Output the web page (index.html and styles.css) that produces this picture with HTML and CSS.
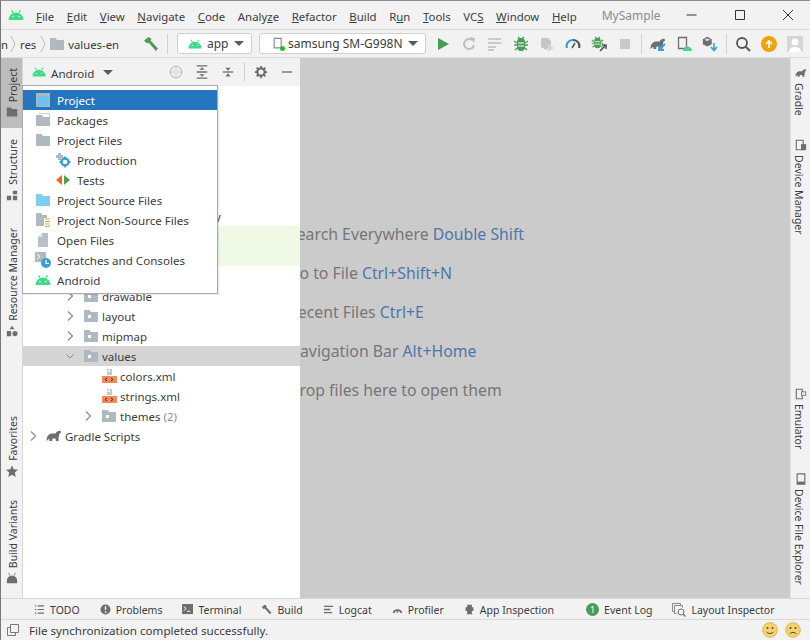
FILE: index.html
```html
<!DOCTYPE html>
<html lang="en">
<head>
  <meta charset="UTF-8" />
  <title>MySample</title>
  <link rel="stylesheet" href="styles.css">
</head>
<body>
  <svg class="defs" width="0" height="0">
    <symbol id="android" viewBox="0 0 16 12"><path d="M3.600 1.200 5 3.600M12.400 1.200 11 3.600" stroke="#3ddc84" stroke-width="1.200" fill="none"/><path d="M0.500 11a7.500 7.500 0 0 1 15 0z" fill="#3ddc84"/><circle cx="5" cy="7.600" r=".8" fill="#fff"/><circle cx="11" cy="7.600" r=".8" fill="#fff"/></symbol>
    <symbol id="folder" viewBox="0 0 16 14"><path d="M1 1h5.500l1.500 2h7v10H1z" fill="#afb9c0"/></symbol>
    <symbol id="resfolder" viewBox="0 0 16 14"><path d="M1 1h5.500l1.500 2h7v10H1z" fill="#afb9c0"/><rect x="5" y="6" width="3" height="3" fill="#fff"/></symbol>
    <symbol id="chev" viewBox="0 0 10 12"><path d="M3 1.500 7.500 6 3 10.500" fill="none" stroke="#8a8a8a" stroke-width="1.200"/></symbol>
    <symbol id="chevdown" viewBox="0 0 12 10"><path d="M1.500 3 6 7.500 10.500 3" fill="none" stroke="#8a8a8a" stroke-width="1.200"/></symbol>
    <symbol id="gradle" viewBox="0 0 16 12"><path d="M.5 11C.5 6 3 3.500 6.500 3.500h3C10.500 1.500 13 .5 14.500 1c1 .6.500 2.500-1 2.500-.5 2-1 4-1 7.500h-2.500l-.5-2.500H6.500L6 11H3.500l-.3-2.300C2.300 9.300 1.500 10 .5 11z" fill="#6e6e6e"/></symbol>
    <symbol id="xml" viewBox="0 0 16 16"><path d="M6 1h5v6H6z" fill="#c4cbd0"/><path d="M6 4 9 1v3z" fill="#fff"/><rect x="1" y="8" width="15" height="7" fill="#f08a5d"/><path d="M6 10 4 11.500 6 13M10 10l2 1.500L10 13" fill="none" stroke="#4b2a18" stroke-width="1"/></symbol>
    <symbol id="hammer" viewBox="0 0 16 16"><path d="M1 4.500 5.500 1l3 2-1 1.500L15 12.500 13 15 5.500 6.500 4 7.500z" fill="#499c54"/></symbol>
    <symbol id="phone" viewBox="0 0 14 16"><path d="M1.500 1.500h8v11h-8z" fill="none" stroke="#7f8b91" stroke-width="1.300"/></symbol>
    <symbol id="bug" viewBox="0 0 16 16"><path d="M8 2a4 4 0 0 1 4 4v5a4 4 0 0 1-8 0V6a4 4 0 0 1 4-4z" fill="#499c54"/><path d="M1 5l3 2M15 5l-3 2M1 9h3M15 9h-3M2 14l2-2M14 14l-2-2M5 1l2 2M11 1 9 3" stroke="#499c54" stroke-width="1.300"/><path d="M5 7h6M5 10h6" stroke="#fff" stroke-width="1"/></symbol>
    <symbol id="cube" viewBox="0 0 16 16"><path d="M6.500 1 12 4v6l-5.500 3L1 10V4z" fill="#6e6e6e"/><path d="M3 4.500 6.500 6.500 10 4.500 6.500 2.700z" fill="#d8d8d8"/></symbol>
    <symbol id="smile" viewBox="0 0 16 16"><circle cx="8" cy="8" r="7.300" fill="#f5d36a" stroke="#d7a93a" stroke-width=".8"/><circle cx="5.500" cy="6" r="1" fill="#4d4d4d"/><circle cx="10.500" cy="6" r="1" fill="#4d4d4d"/><path d="M4.500 10c1.500 2 5.500 2 7 0" fill="none" stroke="#4d4d4d"/></symbol>
    <symbol id="frown" viewBox="0 0 16 16"><circle cx="8" cy="8" r="7.300" fill="#f5d36a" stroke="#d7a93a" stroke-width=".8"/><circle cx="5.500" cy="6" r="1" fill="#4d4d4d"/><circle cx="10.500" cy="6" r="1" fill="#4d4d4d"/><path d="M4.500 12c1.500-2 5.500-2 7 0" fill="none" stroke="#4d4d4d"/></symbol>
  </svg>

  <div class="app">
    <header class="titlebar">
      <svg class="logo"><use href="#android"/></svg>
      <nav class="menu">
        <span><u>F</u>ile</span><span><u>E</u>dit</span><span><u>V</u>iew</span><span><u>N</u>avigate</span><span><u>C</u>ode</span><span>Analy<u>z</u>e</span><span><u>R</u>efactor</span><span><u>B</u>uild</span><span>R<u>u</u>n</span><span><u>T</u>ools</span><span>VC<u>S</u></span><span><u>W</u>indow</span><span><u>H</u>elp</span>
      </nav>
      <span class="app-title">MySample</span>
      <div class="winctl">
        <svg viewBox="0 0 12 12"><path d="M.5 6h10" stroke="#333"/></svg>
        <svg viewBox="0 0 12 12"><path d="M1.500 1.500h9v9h-9z" fill="none" stroke="#333"/></svg>
        <svg viewBox="0 0 12 12"><path d="m1 1 10 10M11 1 1 11" stroke="#333"/></svg>
      </div>
    </header>

    <div class="navbar">
      <div class="crumbs">
        <span class="crumb-cut">n</span>
        <svg class="crumb-sep" viewBox="0 0 6 20"><path d="M1 2l4 8-4 8" fill="none" stroke="#bbb"/></svg>
        <span>res</span>
        <svg class="crumb-sep" viewBox="0 0 6 20"><path d="M1 2l4 8-4 8" fill="none" stroke="#bbb"/></svg>
        <svg class="ico-16 crumb-folder"><use href="#folder"/></svg>
        <span>values-en</span>
      </div>
      <svg class="ico-16 hammer"><use href="#hammer"/></svg>
      <i class="sep"></i>
      <div class="combo combo-app">
        <svg class="ico-14"><use href="#android"/></svg><span>app</span><b class="caret"></b>
      </div>
      <div class="combo combo-device">
        <span class="device-ico"><svg class="ico-14"><use href="#phone"/></svg><i class="dot"></i></span><span>samsung SM-G998N</span><b class="caret"></b>
      </div>
      <div class="tools">
        <span><svg viewBox="0 0 16 16"><path d="M3 2l11 6-11 6z" fill="#499c54"/></svg></span>
        <span><svg viewBox="0 0 16 16"><path d="M13 9a5 5 0 1 1-2-5" fill="none" stroke="#b9bfc3" stroke-width="2"/><path d="M9 1l5 1-1 5z" fill="#b9bfc3"/></svg></span>
        <span><svg viewBox="0 0 16 16"><path d="M1 3h13M1 7h13M1 11h8M1 14h6" stroke="#b9bfc3" stroke-width="1.500"/></svg></span>
        <span><svg><use href="#bug"/></svg></span>
        <span><svg viewBox="0 0 16 16"><path d="M2 2h7l3 3v4l-5 5-5-3z" fill="#c2c7ca"/><path d="M9 8l6 4-6 4z" fill="#d4d7d9"/></svg></span>
        <span><svg viewBox="0 0 16 16"><path d="M2 12a6 6 0 0 1 6-8" fill="none" stroke="#389fd6" stroke-width="2.200"/><path d="M8 4a6 6 0 0 1 6 8" fill="none" stroke="#555" stroke-width="2.200"/><path d="M7 12l3-5" stroke="#555" stroke-width="1.500"/></svg></span>
        <span><svg viewBox="0 0 16 16"><use href="#bug" width="13" height="13"/><path d="M9 15l6-6M11 9h4v4" fill="none" stroke="#555" stroke-width="1.600"/></svg></span>
        <span><svg viewBox="0 0 16 16"><rect x="3" y="3" width="10" height="10" fill="#c6cacc"/></svg></span>
        <i class="sep"></i>
        <span><svg viewBox="0 0 16 16"><use href="#gradle"/><path d="M15 8l-6 6M9 9.500V14h5" fill="none" stroke="#389fd6" stroke-width="1.800"/></svg></span>
        <span><svg viewBox="0 0 16 16"><path d="M2.500 1.500h8v11h-8z" fill="none" stroke="#6e6e6e" stroke-width="1.300"/><path d="M7 15a4.500 4.500 0 0 1 9 0z" fill="#3ddc84"/></svg></span>
        <span><svg viewBox="0 0 16 16"><use href="#cube" width="13" height="13"/><path d="M12 7v7M9 11l3 3.500 3-3.500" fill="none" stroke="#389fd6" stroke-width="1.600"/></svg></span>
        <i class="sep"></i>
        <span><svg viewBox="0 0 16 16"><circle cx="7" cy="7" r="5" fill="none" stroke="#555" stroke-width="1.800"/><path d="M10.500 10.500 15 15" stroke="#555" stroke-width="2"/></svg></span>
        <span><i class="update"><svg viewBox="0 0 10 10"><path d="M5 9V2M2 5l3-3 3 3" fill="none" stroke="#fff" stroke-width="1.600"/></svg></i></span>
        <span><svg class="user" viewBox="0 0 16 16"><rect width="16" height="16" fill="#d4d6d8"/><circle cx="8" cy="6" r="3.500" fill="#fff"/><path d="M2 16c0-4 3-5 6-5s6 1 6 5z" fill="#fff"/></svg></span>
      </div>
    </div>

    <div class="main">
      <aside class="rail rail-left">
        <div class="tab tab-active"><span>Project</span><svg viewBox="0 0 16 14"><path d="M1 1h5.500l1.500 2h7v10H1z" fill="#6e6e6e"/></svg></div>
        <div class="tab tab-structure"><span>Structure</span><svg viewBox="0 0 14 14"><path d="M1 8h5v5H1zM8 8h5v5H8zM8 2h5v4H8z" fill="#6e6e6e"/></svg></div>
        <div class="tab tab-resource"><span>Resource Manager</span><svg viewBox="0 0 14 14"><path d="M7 1l3 4H4zM1 7h5v6H1z" fill="#6e6e6e"/><circle cx="10.500" cy="10" r="3" fill="#6e6e6e"/></svg></div>
        <div class="tab tab-favorites"><span>Favorites</span><svg viewBox="0 0 14 14"><path d="M7 .5l2 4.500 5 .5-3.700 3.300L11.300 14 7 11.400 2.700 14l1-5.200L0 5.500 5 5z" fill="#6e6e6e"/></svg></div>
        <div class="tab tab-variants"><span>Build Variants</span><svg viewBox="0 0 14 14"><path d="M3 1l1.500 3M11 1 9.500 4" stroke="#6e6e6e"/><path d="M1 13v-3a6 6 0 0 1 12 0v3z" fill="#6e6e6e"/></svg></div>
      </aside>

      <section class="panel">
        <div class="panel-head">
          <svg class="ico-14"><use href="#android"/></svg>
          <span class="panel-name">Android</span>
          <b class="caret"></b>
          <div class="panel-tools">
            <span><svg viewBox="0 0 16 16"><circle cx="8" cy="8" r="6.500" fill="none" stroke="#c5c9cb" stroke-width="1.500"/><circle cx="8" cy="8" r="2" fill="none" stroke="#c5c9cb"/><path d="M8 0v5M8 11v5M0 8h5M11 8h5" stroke="#c5c9cb"/></svg></span>
            <span><svg viewBox="0 0 16 16"><path d="M2 1h12M2 15h12M2 8h12" stroke="#6e6e6e" stroke-width="1.500" fill="none"/><path d="M8 2.500l3 3H5zM8 13.500l-3-3h6z" fill="#6e6e6e"/></svg></span>
            <span><svg viewBox="0 0 16 16"><path d="M2 8h12" stroke="#6e6e6e" stroke-width="1.500"/><path d="M8 6.500l-3-3.500h6zM8 9.500l3 3.500H5z" fill="#6e6e6e"/></svg></span>
            <i class="sep"></i>
            <span><svg viewBox="0 0 16 16"><circle cx="8" cy="8" r="4.200" fill="none" stroke="#6e6e6e" stroke-width="2.600"/><path d="M8 1v3M8 12v3M1 8h3M12 8h3M3 3l2 2M11 11l2 2M13 3l-2 2M5 11l-2 2" stroke="#6e6e6e" stroke-width="2"/></svg></span>
            <span><svg viewBox="0 0 16 16"><path d="M2 8h12" stroke="#6e6e6e" stroke-width="1.500"/></svg></span>
          </div>
        </div>

        <div class="tree">
          <div class="row lv0"><svg class="chev"><use href="#chevdown"/></svg><svg class="ico-16"><use href="#folder"/></svg><span>app</span></div>
          <div class="row lv1"><svg class="chev"><use href="#chev"/></svg><svg class="ico-16"><use href="#folder"/></svg><span>manifests</span></div>
          <div class="row lv1"><svg class="chev"><use href="#chevdown"/></svg><svg class="ico-16"><use href="#folder"/></svg><span>java</span></div>
          <div class="row lv2"><svg class="chev"><use href="#chevdown"/></svg><svg class="ico-16"><use href="#folder"/></svg><span>com.example</span></div>
          <div class="row lv3"><svg class="chev"><use href="#chevdown"/></svg><svg class="ico-16"><use href="#folder"/></svg><span>mysample</span></div>
          <div class="row lv3"><svg class="chev"><use href="#chevdown"/></svg><svg class="ico-16"><use href="#folder"/></svg><span>ui</span></div>
          <div class="row lv-file"><svg class="ico-16"><use href="#xml"/></svg><span>MainActivity</span></div>
          <div class="row row-test"><svg class="chev"><use href="#chev"/></svg><svg class="ico-16"><use href="#folder"/></svg><span>java <em>(androidTest)</em></span></div>
          <div class="row row-test"><svg class="chev"><use href="#chev"/></svg><svg class="ico-16"><use href="#folder"/></svg><span>test</span></div>
          <div class="row lv1"><svg class="chev"><use href="#chevdown"/></svg><svg class="ico-16"><use href="#resfolder"/></svg><span>res</span></div>
          <div class="row lv2"><svg class="chev"><use href="#chev"/></svg><svg class="ico-16"><use href="#resfolder"/></svg><span>drawable</span></div>
          <div class="row lv2"><svg class="chev"><use href="#chev"/></svg><svg class="ico-16"><use href="#resfolder"/></svg><span>layout</span></div>
          <div class="row lv2"><svg class="chev"><use href="#chev"/></svg><svg class="ico-16"><use href="#resfolder"/></svg><span>mipmap</span></div>
          <div class="row lv2 row-selected"><svg class="chev"><use href="#chevdown"/></svg><svg class="ico-16"><use href="#resfolder"/></svg><span>values</span></div>
          <div class="row lv3 row-leaf"><i class="chev"></i><svg class="ico-16"><use href="#xml"/></svg><span>colors.xml</span></div>
          <div class="row lv3 row-leaf"><i class="chev"></i><svg class="ico-16"><use href="#xml"/></svg><span>strings.xml</span></div>
          <div class="row lv3"><svg class="chev"><use href="#chev"/></svg><svg class="ico-16"><use href="#resfolder"/></svg><span>themes <em>(2)</em></span></div>
          <div class="row lv0"><svg class="chev"><use href="#chev"/></svg><svg class="ico-16"><use href="#gradle"/></svg><span>Gradle Scripts</span></div>
        </div>

        <ul class="popup">
          <li class="active"><svg class="ico-16" viewBox="0 0 16 16"><rect x="1" y="1" width="14" height="14" fill="#a9b7c1"/><rect x="2.500" y="4.500" width="11" height="9" fill="#6cc0ea"/></svg>Project</li>
          <li><svg class="ico-16" viewBox="0 0 16 16"><path d="M1 3h6l1 2h7v9H1z" fill="#afb9c0"/><path d="M4 1h11v4h-1V2H4z" fill="#c9d0d4"/></svg>Packages</li>
          <li><svg class="ico-16"><use href="#folder"/></svg>Project Files</li>
          <li class="sub"><svg class="ico-16" viewBox="0 0 16 16"><path d="M3 1v2H1v3h2v2h3V6h2V3H6V1z" fill="#afb9c0"/><circle cx="10" cy="10" r="3.500" fill="none" stroke="#389fd6" stroke-width="2.400"/><path d="M10 4.500v2M10 13.500v2M4.500 10h2M13.500 10h2" stroke="#389fd6" stroke-width="1.800"/></svg>Production</li>
          <li class="sub"><svg class="ico-16" viewBox="0 0 16 16"><path d="M7 3v10L1 8z" fill="#f26522"/><path d="M9 3v10l6-5z" fill="#4fa14d"/></svg>Tests</li>
          <li><svg class="ico-16" viewBox="0 0 16 14"><path d="M1 1h5.500l1.500 2h7v10H1z" fill="#7fcdf0"/></svg>Project Source Files</li>
          <li><svg class="ico-16" viewBox="0 0 16 16"><path d="M1 1h5l1.500 2H12v3H9v8H1z" fill="#afb9c0"/><path d="M10 7h5M10 9.500h5M10 12h5M10 14.500h5" stroke="#e8a33d" stroke-width="1.200"/></svg>Project Non-Source Files</li>
          <li><svg class="ico-16" viewBox="0 0 16 16"><path d="M3 5l4-4h6v14H3z" fill="#b8c1c7"/><path d="M3 5h4V1z" fill="#e3e7e9"/></svg>Open Files</li>
          <li><svg class="ico-16" viewBox="0 0 16 16"><rect x="0" y="0" width="11" height="10" fill="#afb9c0"/><path d="M2 2l3 2.500L2 7" fill="none" stroke="#fff"/><circle cx="11" cy="11" r="5" fill="#389fd6"/><path d="M11 8v3.500h3" fill="none" stroke="#fff" stroke-width="1.200"/></svg>Scratches and Consoles</li>
          <li><svg class="ico-16"><use href="#android"/></svg>Android</li>
        </ul>
      </section>

      <section class="editor">
        <p>Search Everywhere <kbd>Double Shift</kbd></p>
        <p>Go to File <kbd>Ctrl+Shift+N</kbd></p>
        <p>Recent Files <kbd>Ctrl+E</kbd></p>
        <p>Navigation Bar <kbd>Alt+Home</kbd></p>
        <p>Drop files here to open them</p>
      </section>

      <aside class="rail rail-right">
        <div class="tab tab-gradle"><svg viewBox="0 0 16 12"><use href="#gradle"/></svg><span>Gradle</span></div>
        <div class="tab tab-devmgr"><svg viewBox="0 0 14 14"><path d="M1.500 1.500h8v11h-8z" fill="none" stroke="#6e6e6e" stroke-width="1.300"/><rect x="7" y="6" width="6" height="7" fill="#6e6e6e"/></svg><span>Device Manager</span></div>
        <div class="tab tab-emulator"><svg viewBox="0 0 14 14"><path d="M1.500 1.500h7v11h-7z" fill="none" stroke="#6e6e6e" stroke-width="1.300"/><rect x="7.500" y="4.500" width="5" height="4" fill="#f2f2f2" stroke="#6e6e6e"/></svg><span>Emulator</span></div>
        <div class="tab tab-explorer"><svg viewBox="0 0 14 14"><path d="M2.500 1h9v12h-9z" fill="none" stroke="#6e6e6e" stroke-width="1.300"/><rect x="2.500" y="10" width="9" height="3" fill="#6e6e6e"/></svg><span>Device File Explorer</span></div>
      </aside>
    </div>

    <div class="toolbar">
      <span class="tw"><svg viewBox="0 0 12 12"><path d="M1 2h1.500M4 2h7M1 6h1.500M4 6h7M1 10h1.500M4 10h7" stroke="#6e6e6e" stroke-width="1.300"/></svg>TODO</span>
      <span class="tw"><svg viewBox="0 0 12 12"><circle cx="6" cy="6" r="5.500" fill="#6e6e6e"/><path d="M6 2.500v4M6 8v1.500" stroke="#fff" stroke-width="1.400"/></svg>Problems</span>
      <span class="tw"><svg viewBox="0 0 12 12"><rect width="12" height="11" fill="#6e6e6e"/><path d="M2 3l2.500 2L2 7M5.500 8H9" fill="none" stroke="#fff"/></svg>Terminal</span>
      <span class="tw"><svg viewBox="0 0 16 16"><path d="M1 4.500 5.500 1l3 2-1 1.500L15 12.500 13 15 5.500 6.500 4 7.500z" fill="#6e6e6e"/></svg>Build</span>
      <span class="tw"><svg viewBox="0 0 12 12"><path d="M1 2.500h10M1 6h7M1 9.500h9" stroke="#6e6e6e" stroke-width="1.400"/></svg>Logcat</span>
      <span class="tw"><svg viewBox="0 0 16 16"><path d="M2 13a6.500 6.500 0 0 1 12 0" fill="none" stroke="#6e6e6e" stroke-width="2.400"/><path d="M7 13l3-5" stroke="#6e6e6e" stroke-width="1.500"/></svg>Profiler</span>
      <span class="tw tw-wide"><svg viewBox="0 0 12 14"><path d="M3 1h6v3h2v5H9v3l1 1H2l1-1V9H1V4h2z" fill="#6e6e6e"/></svg>App Inspection</span>
      <span class="tw"><i class="badge">1</i>Event Log</span>
      <span class="tw"><svg class="tw-lg" viewBox="0 0 14 14"><path d="M.5 .5h8v2M.5 .5v8h2M2.500 2.500h8v2M2.500 2.500v8h2" fill="none" stroke="#8a8a8a"/><circle cx="9" cy="9" r="3" fill="none" stroke="#6e6e6e"/><path d="M11 11l2.500 2.500" stroke="#6e6e6e" stroke-width="1.300"/></svg>Layout Inspector</span>
    </div>

    <footer class="status">
      <svg class="status-box" viewBox="0 0 12 12"><path d="M3.500 .5h8v8h-8zM3.500 3.500H.5v8h8V8.500" fill="none" stroke="#777"/></svg>
      <span>File synchronization completed successfully.</span>
      <svg class="face"><use href="#smile"/></svg>
      <svg class="face"><use href="#frown"/></svg>
    </footer>
  </div>
</body>
</html>
```

FILE: styles.css
```css
* {
  box-sizing: border-box;
}
html, body {
  margin: 0;
  padding: 0;
}
body {
  width: 810px;
  height: 640px;
  overflow: hidden;
  font-family: "Noto Sans", "Open Sans", sans-serif;
  font-size: 11.6px;
  color: #3c3c3c;
  background: #f2f2f2;
}
.defs {
  position: absolute;
}
svg {
  display: block;
  flex: none;
}
.ico-14 {
  width: 14px;
  height: 14px;
}
.ico-16 {
  width: 16px;
  height: 16px;
}
.app {
  width: 810px;
  height: 640px;
  display: flex;
  flex-direction: column;
  border-top: 1px solid #8e8e8e;
  border-left: 1px solid #777;
}
.sep {
  display: block;
  width: 1px;
  height: 20px;
  background: #d2d2d2;
  flex: none;
}

/* title bar */
.titlebar {
  height: 28px;
  display: flex;
  align-items: center;
  flex: none;
}
.logo {
  width: 16px;
  height: 12px;
  margin-left: 7px;
}
.menu {
  display: flex;
  gap: 12.6px;
  margin-left: 12px;
  padding-top: 2px;
  font-size: 11.4px;
}
.menu span {
  white-space: nowrap;
}
.app-title {
  margin-left: 25px;
  font-size: 12px;
  color: #8c8c8c;
}
.winctl {
  margin-left: auto;
  display: flex;
  gap: 36px;
  margin-right: 16px;
}
.winctl svg {
  width: 12px;
  height: 12px;
}

/* navigation bar */
.navbar {
  height: 29px;
  display: flex;
  align-items: center;
  border-top: 1px solid #dcdcdc;
  border-bottom: 1px solid #dcdcdc;
  flex: none;
}
.crumbs {
  width: 141px;
  display: flex;
  align-items: center;
  gap: 4px;
  overflow: hidden;
  flex: none;
  margin-right: 1px;
  font-size: 11.3px;
  padding-top: 1px;
}
.crumb-cut {
  width: 5px;
}
.crumb-sep {
  width: 6px;
  height: 20px;
}
.crumb-folder {
  margin-left: -1px;
  margin-right: -1px;
}
.hammer {
  width: 16px;
  margin-right: 8px;
}
.combo {
  height: 21px;
  display: flex;
  align-items: center;
  background: #fff;
  border: 1px solid #d0d0d0;
  border-radius: 3px;
  font-size: 12px;
  flex: none;
}
.combo-app {
  width: 75px;
  margin-left: 9px;
  padding-left: 10px;
  gap: 5px;
}
.combo-device {
  width: 167px;
  margin-left: 7px;
  padding-left: 12px;
  gap: 2px;
}
.device-ico {
  position: relative;
}
.dot {
  position: absolute;
  right: 1px;
  bottom: 0;
  width: 5px;
  height: 5px;
  border-radius: 50%;
  background: #1fc51f;
}
.caret {
  display: block;
  width: 0;
  height: 0;
  border: 5px solid transparent;
  border-top: 5px solid #5a5a5a;
  border-bottom: 0;
  margin-left: auto;
  margin-right: 7px;
}
.tools {
  display: flex;
  align-items: center;
  margin-left: 4px;
}
.tools span {
  width: 26px;
  display: flex;
  justify-content: center;
  flex: none;
}
.tools svg {
  width: 16px;
  height: 16px;
}
.tools .sep {
  margin: 0 3px;
}
.update {
  width: 16px;
  height: 16px;
  border-radius: 50%;
  background: #f0a30a;
  display: flex;
  align-items: center;
  justify-content: center;
}
.update svg {
  width: 10px;
  height: 10px;
}

/* main area */
.main {
  height: 540px;
  display: flex;
  flex: none;
}
.rail {
  display: flex;
  flex-direction: column;
  flex: none;
  background: #f2f2f2;
}
.rail-left {
  width: 22px;
  border-right: 1px solid #d8d8d8;
}
.rail-right {
  width: 20px;
  border-left: 1px solid #e2e2e2;
}
.tab {
  display: flex;
  flex-direction: column;
  align-items: center;
  gap: 4px;
  padding: 10px 0;
  font-size: 10.5px;
  white-space: nowrap;
}
.tab svg {
  width: 12px;
  height: 12px;
}
.rail-left .tab span {
  writing-mode: vertical-rl;
  transform: rotate(180deg);
  margin-left: 2px;
}
.rail-right .tab span {
  writing-mode: vertical-rl;
  margin-right: 3px;
}
.tab-active {
  background: #bdbdbd;
}
.tab-structure {
  padding-top: 11px;
}
.tab-resource {
  padding-top: 17px;
}
.tab-favorites {
  margin-top: auto;
}
.tab-variants {
  padding-top: 13px;
  padding-bottom: 14px;
}
.tab-gradle {
  padding-top: 9px;
}
.tab-devmgr {
  padding-top: 13px;
}
.tab-emulator {
  margin-top: auto;
}
.tab-explorer {
  padding-top: 14px;
  padding-bottom: 13px;
}

/* project panel */
.panel {
  width: 277px;
  position: relative;
  background: #fff;
  flex: none;
}
.panel-head {
  height: 28px;
  display: flex;
  align-items: center;
  background: #f2f2f2;
  padding-left: 9px;
}
.panel-name {
  margin-left: 5px;
  margin-right: 9px;
  padding-top: 2px;
}
.panel-head .caret {
  margin: 0;
}
.panel-tools {
  margin-left: auto;
  display: flex;
  align-items: center;
}
.panel-tools span {
  width: 26px;
  display: flex;
  justify-content: center;
}
.panel-tools svg {
  width: 14px;
  height: 14px;
}
.panel-tools .sep {
  margin: 0 3px;
}
.tree {
  display: flex;
  flex-direction: column;
  font-size: 11.5px;
}
.row {
  height: 20px;
  display: flex;
  align-items: center;
  white-space: nowrap;
  overflow: hidden;
}
.row em {
  font-style: normal;
  color: #8c8c8c;
}
.row span {
  margin-left: 3px;
  padding-top: 1px;
}
.chev {
  display: block;
  width: 10px;
  height: 12px;
  margin-right: 8px;
  flex: none;
}
.lv0 {
  padding-left: 5px;
}
.lv1 {
  padding-left: 23px;
}
.lv2 {
  padding-left: 42px;
}
.lv3 {
  padding-left: 60px;
}
.lv-file {
  padding-left: 113px;
}
.row-test {
  padding-left: 63px;
  background: #eff9e6;
}
.row-selected {
  background: #d5d5d5;
}

/* view switcher popup */
.popup {
  position: absolute;
  left: -1px;
  top: 27px;
  width: 196px;
  height: 209px;
  margin: 0;
  padding: 4px 0 3px;
  list-style: none;
  background: #fff;
  border: 1px solid #ababab;
  box-shadow: 1px 1px 1px rgba(0, 0, 0, .08);
}
.popup li {
  height: 20px;
  display: flex;
  align-items: center;
  gap: 6px;
  padding-left: 12px;
  white-space: nowrap;
}
.popup .sub {
  padding-left: 32px;
}
.popup .active {
  background: #2675bf;
  color: #fff;
}

/* dimmed editor hints */
.editor {
  flex: 1;
  min-width: 0;
  overflow: hidden;
  background: #cbcbcb;
  color: #767676;
  font-size: 15.8px;
  padding-top: 166px;
  display: flex;
  flex-direction: column;
  gap: 19px;
  white-space: nowrap;
}
.editor p {
  margin: 0 0 0 -12px;
  height: 20px;
  line-height: 20px;
}
.editor kbd {
  font: inherit;
  color: #4b77a9;
}

/* bottom tool windows */
.toolbar {
  height: 21px;
  display: flex;
  align-items: center;
  gap: 20px;
  padding-left: 33px;
  padding-top: 1px;
  border-top: 1px solid #d8d8d8;
  font-size: 10.5px;
  flex: none;
}
.tw {
  display: flex;
  align-items: center;
  gap: 5px;
  white-space: nowrap;
}
.tw svg {
  width: 11px;
  height: 11px;
}
.tw .tw-lg {
  width: 14px;
  height: 14px;
}
.tw-wide {
  margin-right: 12px;
}
.badge {
  width: 13px;
  height: 13px;
  border-radius: 50%;
  background: #499c54;
  color: #fff;
  font-style: normal;
  font-size: 9px;
  line-height: 13px;
  text-align: center;
}
.status {
  height: 21px;
  display: flex;
  align-items: center;
  padding: 0 9px 0 6px;
  border-top: 1px solid #d8d8d8;
  flex: none;
}
.status-box {
  width: 12px;
  height: 12px;
  margin-right: 10px;
}
.face {
  width: 16px;
  height: 16px;
  margin-left: 7px;
}
.status span {
  margin-right: auto;
}
```
